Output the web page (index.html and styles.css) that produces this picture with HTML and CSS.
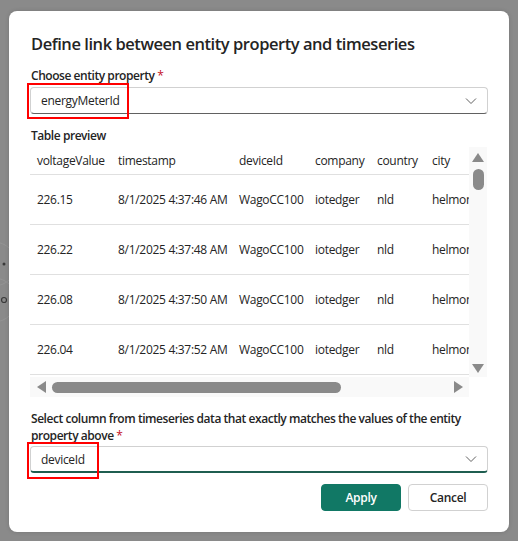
FILE: index.html
```html
<!DOCTYPE html>
<html lang="en">
<head>
<meta charset="utf-8">
<title>Define link</title>
<link rel="stylesheet" href="styles.css">
</head>
<body>
<svg class="backdrop" width="40" height="541" viewBox="0 0 40 541" aria-hidden="true">
  <circle cx="-6" cy="264" r="22" fill="none" stroke="#949494" stroke-width="1"/>
  <circle cx="4" cy="264" r="1.5" fill="#3a3a3a"/>
  <circle cx="-6" cy="300" r="22" fill="none" stroke="#949494" stroke-width="1"/>
  <circle cx="4" cy="300" r="2.5" fill="none" stroke="#3a3a3a" stroke-width="1.2"/>
</svg>
<div class="dialog">
  <h1 class="title">Define link between entity property and timeseries</h1>

  <label class="label label-first">Choose entity property <span class="req">*</span></label>
  <div class="dropdown">
    <span class="value">energyMeterId</span>
    <svg class="chev" width="12" height="8" viewBox="0 0 12 8"><path d="M1 1.5 L6 6.5 L11 1.5" fill="none" stroke="#616161" stroke-width="1"/></svg>
    <span class="mark mark-1"></span>
  </div>

  <div class="label label-preview">Table preview</div>
  <div class="preview">
    <div class="viewport">
      <div class="row head">
        <div class="c c1">voltageValue</div><div class="c c2">timestamp</div><div class="c c3">deviceId</div><div class="c c4">company</div><div class="c c5">country</div><div class="c c6">city</div>
      </div>
      <div class="row">
        <div class="c c1">226.15</div><div class="c c2">8/1/2025 4:37:46 AM</div><div class="c c3">WagoCC100</div><div class="c c4">iotedger</div><div class="c c5">nld</div><div class="c c6">helmond</div>
      </div>
      <div class="row">
        <div class="c c1">226.22</div><div class="c c2">8/1/2025 4:37:48 AM</div><div class="c c3">WagoCC100</div><div class="c c4">iotedger</div><div class="c c5">nld</div><div class="c c6">helmond</div>
      </div>
      <div class="row">
        <div class="c c1">226.08</div><div class="c c2">8/1/2025 4:37:50 AM</div><div class="c c3">WagoCC100</div><div class="c c4">iotedger</div><div class="c c5">nld</div><div class="c c6">helmond</div>
      </div>
      <div class="row">
        <div class="c c1">226.04</div><div class="c c2">8/1/2025 4:37:52 AM</div><div class="c c3">WagoCC100</div><div class="c c4">iotedger</div><div class="c c5">nld</div><div class="c c6">helmond</div>
      </div>
    </div>
    <div class="vbar">
      <span class="tri tri-up"></span>
      <span class="vthumb"></span>
      <span class="vspace"></span>
      <span class="tri tri-down"></span>
    </div>
    <div class="hbar">
      <span class="tri tri-left"></span>
      <span class="hthumb"></span>
      <span class="hspace"></span>
      <span class="tri tri-right"></span>
    </div>
    <div class="corner"></div>
  </div>

  <label class="label label-second">Select column from timeseries data that exactly matches the values of the entity property above <span class="req">*</span></label>
  <div class="dropdown focused">
    <span class="value">deviceId</span>
    <svg class="chev" width="12" height="8" viewBox="0 0 12 8"><path d="M1 1.5 L6 6.5 L11 1.5" fill="none" stroke="#616161" stroke-width="1"/></svg>
    <span class="mark mark-2"></span>
  </div>

  <div class="actions">
    <button class="btn primary">Apply</button>
    <button class="btn">Cancel</button>
  </div>
</div>
</body>
</html>
```
FILE: styles.css
```css
html, body {
  margin: 0;
  padding: 0;
}
body {
  background: #8a8a8a;
  width: 518px;
  height: 541px;
  overflow: hidden;
  padding: 11px 0 0 9px;
  box-sizing: border-box;
  font-family: "Segoe UI", "Open Sans", sans-serif;
  color: #242424;
  position: relative;
}
.backdrop {
  position: absolute;
  left: 0;
  top: 0;
}
.dialog {
  position: relative;
  width: 500px;
  height: 521px;
  background: #ffffff;
  border-radius: 8px;
  box-sizing: border-box;
  padding: 20px 21px 0 21px;
  display: flex;
  flex-direction: column;
  box-shadow: 0 0 4px rgba(0,0,0,0.15);
}
.title {
  margin: 0;
  font-size: 16.5px;
  font-weight: 600;
  line-height: 26px;
  letter-spacing: -0.45px;
  padding-left: 1px;
}
.label {
  display: block;
  font-size: 12px;
  font-weight: 600;
  line-height: 17px;
  letter-spacing: -0.45px;
  padding-left: 1px;
}
.label-first { margin-top: 10px; }
.label-preview { margin-top: 13px; }
.label-second { margin-top: 13px; }
.req { color: #c50f1f; font-weight: 400; }

.dropdown {
  position: relative;
  margin-top: 3px;
  height: 27px;
  box-sizing: border-box;
  border: 1px solid #d1d1d1;
  border-bottom-color: #616161;
  border-radius: 4px;
  display: flex;
  align-items: center;
  padding: 0 10px 0 10px;
  font-size: 12px;
  letter-spacing: -0.3px;
}
.dropdown.focused {
  margin-top: 2px;
  border-bottom: 2px solid #1f5e50;
}
.dropdown .value { flex: 1; }
.chev { display: block; }
.mark {
  position: absolute;
  border: 2px solid #ff0000;
  box-sizing: border-box;
}
.mark-1 { left: -4px; top: -5px; width: 102px; height: 36px; }
.mark-2 { left: -4px; top: -5px; width: 72px; height: 37px; }

.preview {
  margin-top: 3px;
  display: grid;
  grid-template-columns: 439px 18px;
  grid-template-rows: 230px 20px;
  font-size: 12px;
  letter-spacing: -0.3px;
}
.viewport {
  overflow: hidden;
}
.row {
  display: flex;
  height: 50px;
  box-sizing: border-box;
  border-bottom: 1px solid #e0e0e0;
  align-items: center;
  white-space: nowrap;
  width: 460px;
}
.row.head { height: 28px; }
.c { padding-left: 7px; box-sizing: border-box; flex: none; }
.c1 { width: 81px; }
.c2 { width: 121px; }
.c3 { width: 76px; }
.c4 { width: 62px; }
.c5 { width: 55px; }
.c6 { width: 65px; }

.vbar {
  background: #f9f9f9;
  display: flex;
  flex-direction: column;
  align-items: center;
  padding: 6px 0 4px;
  box-sizing: border-box;
}
.vthumb {
  width: 11px;
  height: 21px;
  border-radius: 6px;
  background: #8a8a8a;
  margin-top: 7px;
}
.vspace { flex: 1; }
.hbar {
  background: #f9f9f9;
  display: flex;
  align-items: center;
  padding: 0 6px 0 7px;
  box-sizing: border-box;
}
.hthumb {
  width: 289px;
  height: 11px;
  border-radius: 6px;
  background: #8a8a8a;
  margin-left: 6px;
}
.hspace { flex: 1; }
.corner { background: #ffffff; }
.tri { width: 0; height: 0; display: block; }
.tri-up { border-left: 6px solid transparent; border-right: 6px solid transparent; border-bottom: 9px solid #8a8a8a; }
.tri-down { border-left: 6px solid transparent; border-right: 6px solid transparent; border-top: 9px solid #8a8a8a; }
.tri-left { border-top: 6px solid transparent; border-bottom: 6px solid transparent; border-right: 9px solid #8a8a8a; }
.tri-right { border-top: 6px solid transparent; border-bottom: 6px solid transparent; border-left: 9px solid #8a8a8a; }

.actions {
  margin-top: 11px;
  display: flex;
  justify-content: flex-end;
  gap: 7px;
}
.btn {
  width: 80px;
  height: 27px;
  border-radius: 4px;
  border: 1px solid #d1d1d1;
  background: #ffffff;
  color: #242424;
  font-family: inherit;
  font-size: 12px;
  letter-spacing: -0.3px;
  font-weight: 600;
  padding: 0;
}
.btn.primary {
  background: #117865;
  border-color: #117865;
  color: #ffffff;
}
```
